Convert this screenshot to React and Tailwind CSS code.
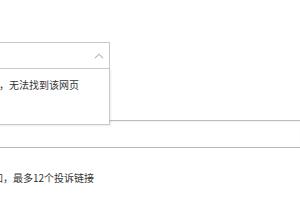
import React from "react";

export default function App() {
  const font = { fontFamily: '"SimSun","Noto Sans CJK SC","Liberation Sans",sans-serif' };
  return (
    <div className="w-[300px] h-[200px] bg-white overflow-hidden text-[#333]" style={font}>
      <div className="pt-[42px] -ml-[200px]">
        <div className="relative z-10 w-[310px]">
          <div className="h-[27px] border border-[#c8c8c8] flex items-center justify-end pr-[5px]">
            <svg width="10" height="6" viewBox="0 0 10 6">
              <path d="M1 5.2 L5 1.2 L9 5.2" fill="none" stroke="#b4b4b4" strokeWidth="1.1" />
            </svg>
          </div>
          <div className="absolute left-0 top-[26px] w-[310px] h-[57px] bg-white border border-[#c8c8c8] shadow-[1px_1px_2px_rgba(0,0,0,0.08)] pt-[9px]">
            <div className="text-[10px] leading-[14px] whitespace-nowrap flex justify-end pr-[30px]">
              <span>打开后显示错误，无法找到该网页</span>
            </div>
          </div>
        </div>
        <div className="mt-[51px] w-[500px] h-[28px] border-t border-t-[#bdbdbd] border-b border-b-[#b8b8b8] shadow-[inset_0_1px_1px_rgba(0,0,0,0.06)]"></div>
        <div className="mt-[23px] text-[10px] leading-[14px] whitespace-nowrap flex">
          <span className="inline-block w-[294px] text-right">点击添加，最多12个投诉链接</span>
        </div>
      </div>
    </div>
  );
}
